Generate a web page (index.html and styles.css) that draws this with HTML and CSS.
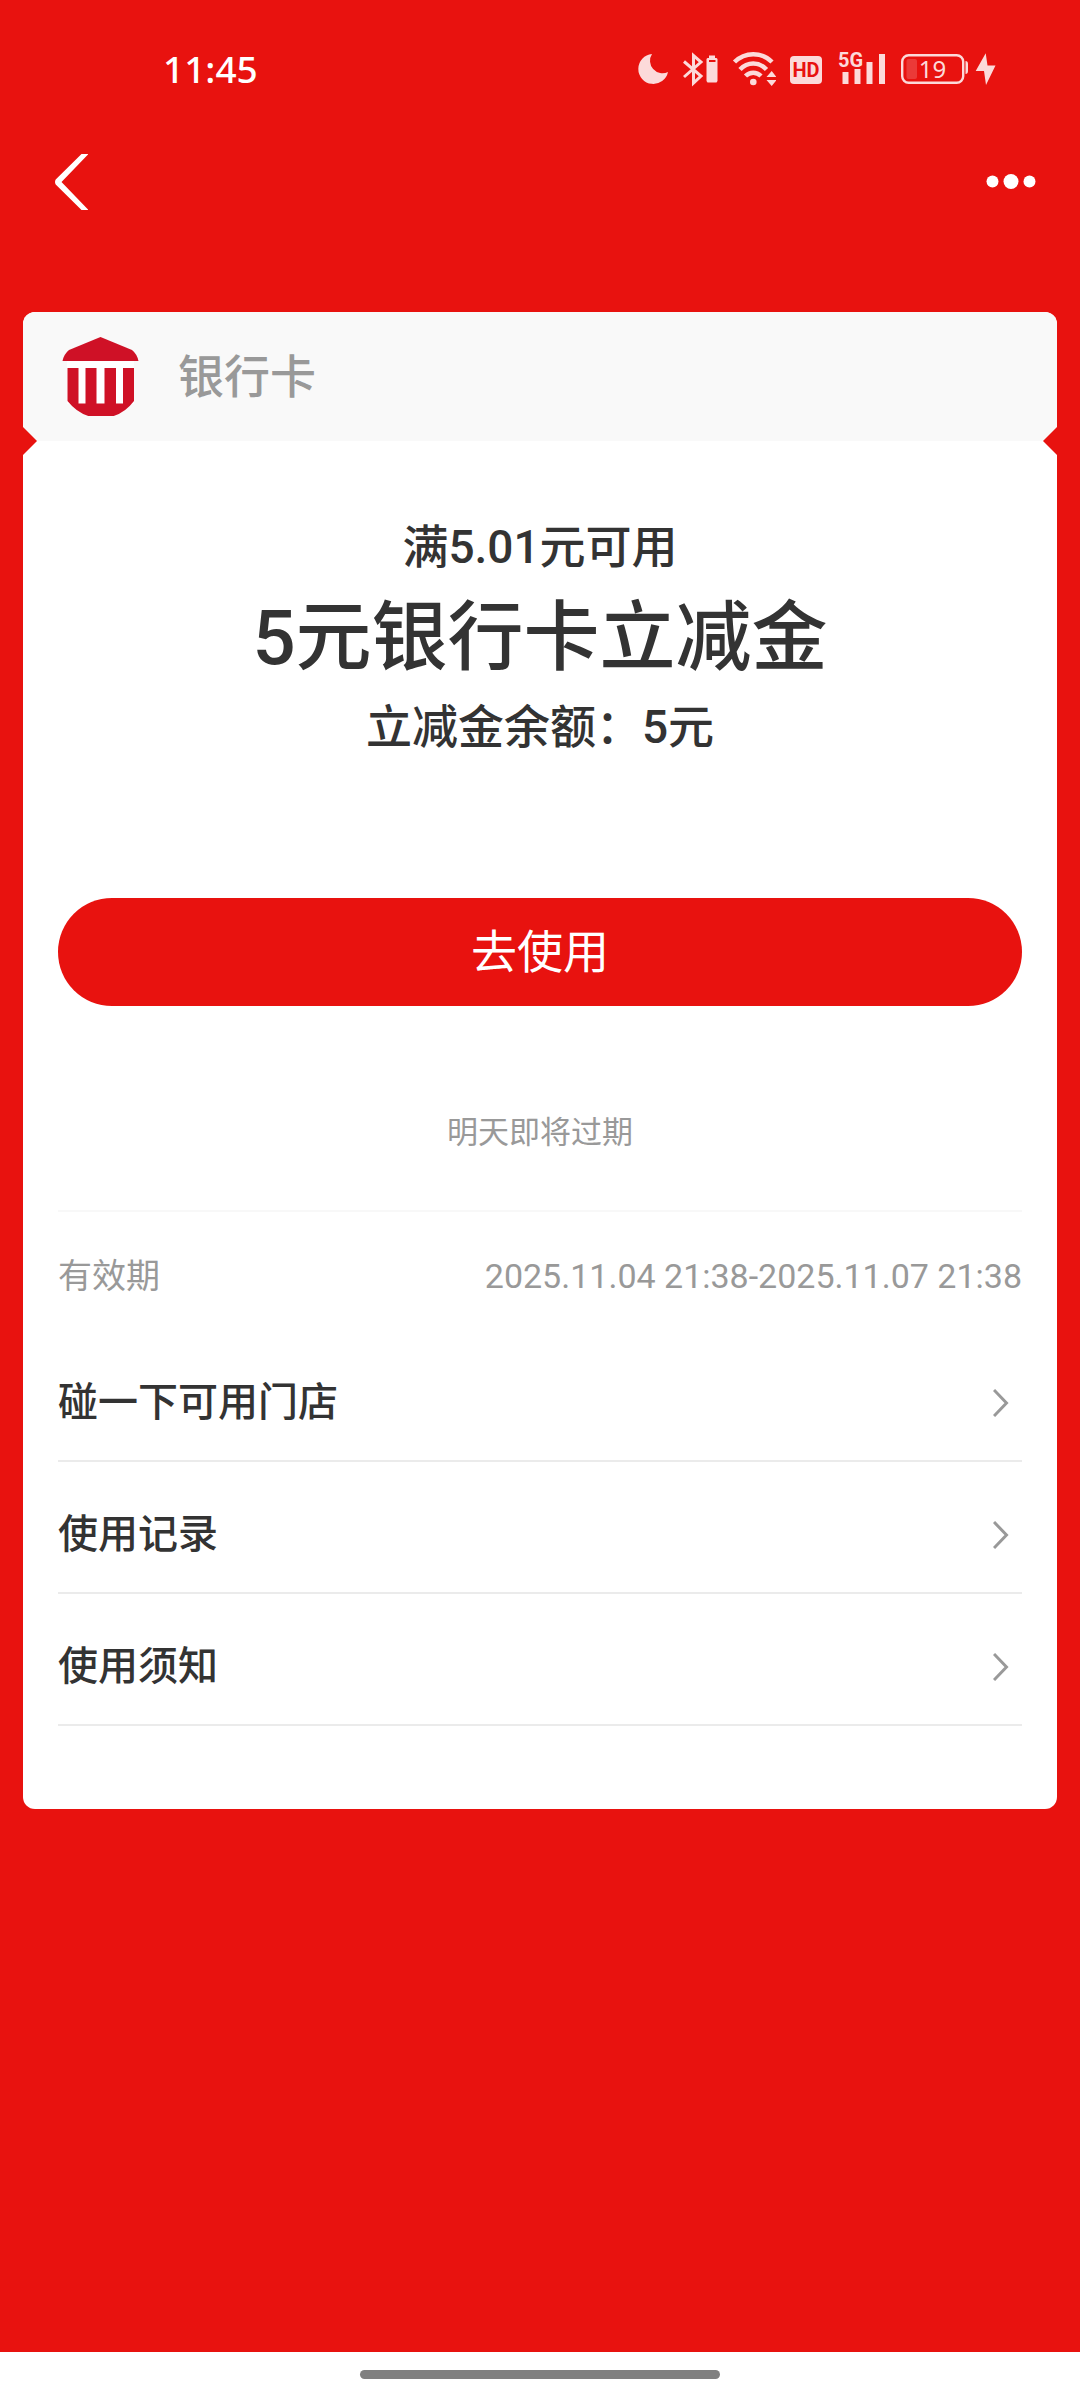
FILE: index.html
```html
<!DOCTYPE html>
<html lang="zh-CN">
<head>
<meta charset="utf-8">
<meta name="viewport" content="width=device-width, initial-scale=1">
<title>银行卡立减金</title>
<link rel="stylesheet" href="styles.css">
</head>
<body>
<div class="page">
  <div class="status">
    <time class="clock">11:45</time>
    <div class="status-icons" aria-hidden="true">
      <svg width="31" height="40" viewBox="0 0 31 40"><path fill="currentColor" d="M14 5A15 15 0 1 0 30 23A12.500 12.500 0 0 1 14 5Z"/></svg>
      <svg width="35" height="40" viewBox="0 0 35 40">
        <path fill="none" stroke="currentColor" stroke-width="3" d="M1 12.500L18 27L10.500 34V6.500L18 13L1 28"/>
        <path fill="currentColor" fill-rule="evenodd" d="M26 6.500h6V9h1.500l1 1V32l-1 1.500h-9L23.500 32V10l1-1H26ZM26 11v2h6.500v-2Z"/>
      </svg>
      <svg width="44" height="40" viewBox="0 0 44 40">
        <g fill="none" stroke="currentColor" stroke-width="4.500">
          <path d="M2.500 13C13 2.500 29.500 2.500 40 13"/>
          <path d="M8 20.500C15.500 12.500 27 12.500 34.500 20.500"/>
          <path d="M13.500 27C18 22.500 24.500 22.500 29 27"/>
        </g>
        <circle cx="21.300" cy="33" r="3.300" fill="currentColor"/>
        <path fill="currentColor" d="M39.700 22L44.500 28H34.500ZM39.700 37L44.500 31H34.500Z"/>
      </svg>
      <svg width="34" height="40" viewBox="0 0 34 40">
        <rect y="7" width="32" height="28" rx="4" fill="currentColor"/>
        <text class="hd" x="16" y="28" text-anchor="middle">HD</text>
      </svg>
      <svg width="49" height="40" viewBox="0 0 49 40">
        <text class="net" x="0" y="18">5G</text>
        <path fill="currentColor" d="M4.500 23h6v12h-6ZM16.500 20h6v15h-6ZM28.500 13h6v22h-6ZM41 5h6v30h-6Z"/>
      </svg>
      <svg width="95" height="40" viewBox="0 0 95 40">
        <rect x="1.200" y="6.200" width="61" height="27.600" rx="6.500" fill="none" stroke="currentColor" stroke-width="2.400"/>
        <rect x="5.500" y="10" width="10.500" height="20" rx="2" fill="currentColor" opacity=".2"/>
        <text class="level" x="31.500" y="29" text-anchor="middle">19</text>
        <path fill="currentColor" d="M64.500 12q2.500 0 2.500 3v7q0 3-2.500 3ZM84.700 4.300L74.700 22H83L85 36L94.500 16.500H86.500Z"/>
      </svg>
    </div>
  </div>

  <nav class="nav">
    <button class="icon-button" type="button" aria-label="返回">
      <svg width="33" height="56" viewBox="0 0 33 56"><path fill="#fff" d="M26.500 0H33.500L6.500 28L33.500 56H26.500L.700 30.500Q-.700 28 .700 25.500Z"/></svg>
    </button>
    <button class="icon-button" type="button" aria-label="更多">
      <svg width="50" height="16" viewBox="0 0 50 16" fill="#fff"><circle cx="6.500" cy="7.500" r="6"/><circle cx="25" cy="7.500" r="7.500"/><circle cx="43.500" cy="7.500" r="6"/></svg>
    </button>
  </nav>

  <main class="card">
    <header class="card-head">
      <svg width="77" height="80" viewBox="0 0 77 80" fill="#cf1126" aria-hidden="true">
        <path d="M38.500 1L70 14Q75 18 76.500 25H.500Q2 18 7 14Z"/>
        <path fill="#fff" d="M5 25H72V68H5Z"/>
        <path d="M5.500 32H16.500V67.500H23.500V32H34.500V67.500H42.500V32H54V67.500H61V32H72V65Q63 77 50 80.500H28Q15 77 5.500 65Z"/>
      </svg>
      <span class="card-name">银行卡</span>
    </header>
    <div class="card-body">
      <p class="sub">满5.01元可用</p>
      <h1 class="title">5元银行卡立减金</h1>
      <p class="sub">立减金余额：5元</p>
      <button class="use" type="button">去使用</button>
      <p class="expiry">明天即将过期</p>
      <dl class="validity">
        <dt>有效期</dt>
        <dd>2025.11.04 21:38-2025.11.07 21:38</dd>
      </dl>
      <ul class="links">
        <li><a class="link" href="#stores">碰一下可用门店<svg width="16" height="28" viewBox="0 0 16 28"><path d="M1 1L13.500 14L1 27"/></svg></a></li>
        <li><a class="link" href="#records">使用记录<svg width="16" height="28" viewBox="0 0 16 28"><path d="M1 1L13.500 14L1 27"/></svg></a></li>
        <li><a class="link" href="#notice">使用须知<svg width="16" height="28" viewBox="0 0 16 28"><path d="M1 1L13.500 14L1 27"/></svg></a></li>
      </ul>
    </div>
  </main>

  <div class="home-bar"><span class="home-pill"></span></div>
</div>
</body>
</html>
```
FILE: styles.css
```css
:root {
  --red: #e8120f;
  --ink: #333;
  --muted: #999;
}

* { box-sizing: border-box; }

body {
  margin: 0;
  color: var(--ink);
  font-family: Roboto, "Noto Sans CJK SC", sans-serif;
}

p, h1, dl, dd, ul { margin: 0; }

svg { display: block; flex: none; }

button {
  border: 0;
  padding: 0;
  background: none;
  font-family: inherit;
}

.page {
  display: flex;
  flex-direction: column;
  min-height: 100vh;
  background: var(--red);
}

.status {
  display: flex;
  align-items: center;
  justify-content: space-between;
  padding: 44px 84px 44px 163px;
  color: #fff;
}

.clock {
  font: 500 37px/50px "Noto Sans", sans-serif;
}

.status-icons {
  display: flex;
  gap: 14px;
  color: #fcdada;
}

.hd, .net {
  font: 700 20px Roboto, sans-serif;
}

.hd { fill: var(--red); }
.net { fill: currentColor; }

.level {
  fill: currentColor;
  font: 400 24px "Noto Sans", sans-serif;
}

.nav {
  display: flex;
  align-items: center;
  justify-content: space-between;
  padding: 16px 44px 16px 55px;
}

.icon-button { cursor: pointer; }

.card {
  position: relative;
  margin: 86px 23px 0;
  border-radius: 12px;
  background: #fff;
}

.card-head {
  position: relative;
  display: flex;
  align-items: center;
  gap: 39px;
  padding: 24px 39px 25px;
  border-radius: 12px 12px 0 0;
  background: #f9f9f9;
}

/* ticket notches where the header meets the body */
.card-head::before,
.card-head::after {
  content: "";
  position: absolute;
  bottom: -14px;
  width: 14px;
  height: 28px;
  background: var(--red);
}

.card-head::before {
  left: 0;
  clip-path: polygon(0 0, 100% 50%, 0 100%);
}

.card-head::after {
  right: 0;
  clip-path: polygon(100% 0, 0 50%, 100% 100%);
}

.card-name {
  padding-top: 2px;
  color: var(--muted);
  font-size: 46px;
  font-weight: 500;
  line-height: 60px;
}

.card-body {
  display: flex;
  flex-direction: column;
  padding: 75px 35px 83px;
  text-align: center;
}

.sub {
  font-size: 46px;
  font-weight: 500;
  line-height: 62px;
}

.title {
  padding-top: 2px;
  font-size: 76px;
  font-weight: 500;
  line-height: 116px;
}

.use {
  margin-top: 140px;
  border-radius: 54px;
  background: var(--red);
  color: #fff;
  font-size: 46px;
  line-height: 108px;
  cursor: pointer;
}

.expiry {
  margin-top: 103px;
  color: var(--muted);
  font-size: 31px;
  line-height: 48px;
}

.validity {
  display: flex;
  justify-content: space-between;
  margin-top: 53px;
  padding: 40px 0 30px;
  border-top: 2px solid #f8f8f8;
  color: var(--muted);
  font-size: 34px;
  line-height: 48px;
}

.links {
  padding: 0;
  list-style: none;
}

.link {
  display: flex;
  align-items: center;
  justify-content: space-between;
  padding: 49px 13px 33px 0;
  border-bottom: 2px solid #ebebeb;
  color: var(--ink);
  font-size: 40px;
  font-weight: 500;
  line-height: 48px;
  text-decoration: none;
}

.link path {
  fill: none;
  stroke: var(--muted);
  stroke-width: 3;
}

.home-bar {
  display: flex;
  justify-content: center;
  margin-top: auto;
  padding: 18px 0 21px;
  background: #fff;
}

.home-pill {
  width: 33.33%;
  height: 9px;
  border-radius: 5px;
  background: #808080;
}
```
